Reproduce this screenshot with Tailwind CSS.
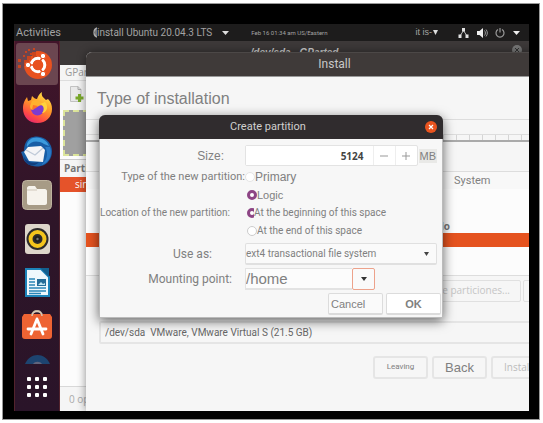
<!DOCTYPE html>
<html lang="en">
<head>
<meta charset="utf-8">
<meta name="viewport" content="width=device-width, initial-scale=1">
<title>Install Ubuntu</title>
<script src="https://cdn.jsdelivr.net/npm/@tailwindcss/browser@4"></script>
</head>
<body class="bg-white font-['Liberation_Sans',sans-serif] text-[#808080]">
<div class="h-screen pt-[3px] pb-[3px] pl-[2px] pr-[3px]">
<div class="flex h-full flex-col border border-[#999] bg-black pt-[20px] pr-[10px] pb-[8px] pl-[11px]">
<main class="flex min-h-0 flex-1 flex-col overflow-hidden whitespace-nowrap bg-[#f6f6f6]">

  <!-- Top bar -->
  <header class="flex h-[17px] shrink-0 items-center bg-[#1d1c1c] font-[Roboto,sans-serif] text-[#a3a3a3]">
    <button class="w-[79px] pl-[2px] text-left text-[11px] leading-[17px]">Activities</button>
    <button class="flex items-center text-[10px] leading-[17px]">
      <svg class="h-[11px] w-[4px]" viewBox="0 0 4 11"><path d="M4 1C0 2 0 9 4 10M3 2v7" fill="none" stroke="#aaa" stroke-width="1.3"/></svg>
      install Ubuntu 20.04.3 LTS
      <svg class="ml-[10px] h-[4px] w-[7px]" viewBox="0 0 7 4"><path d="M0 0h7L3.500 4z" fill="#ddd"/></svg>
    </button>
    <time class="ml-[22px] text-[6px] leading-[17px]">Feb 16 01:34 am US/Eastern</time>
    <div class="ml-auto flex items-center pr-[9px]">
      <button class="mr-[20px] flex items-center gap-[1px] font-['Liberation_Sans',sans-serif] text-[9px] leading-[17px]">it is-
        <svg class="h-[5px] w-[5px]" viewBox="0 0 5 5"><path d="M0 0h5L2.500 5z" fill="#ddd"/></svg>
      </button>
      <svg class="h-[10px] w-[11px]" viewBox="0 0 11 10"><path d="M5.500 2.500L2 8M5.500 2.500L9 8" stroke="#bbb" stroke-width="1"/><path d="M4 0h3v3.500H4zM.5 6.500h3V10h-3zM7.500 6.500h3V10h-3z" fill="#e2e2e2"/></svg>
      <svg class="ml-[8px] h-[10px] w-[11px]" viewBox="0 0 11 10"><path d="M0 3h2.500L6 0v10L2.500 7H0z" fill="#eee"/><path d="M7.500 2.500c1.200 1.500 1.200 3.500 0 5M9 1.500c1.800 2 1.800 5 0 7" fill="none" stroke="#999"/></svg>
      <svg class="ml-[7px] h-[10px] w-[10px]" viewBox="0 0 10 10"><path d="M3 1.600a4 4 0 1 0 4 0M5 0v4.500" fill="none" stroke="#999" stroke-width="1.200"/></svg>
      <svg class="ml-[8px] h-[4px] w-[7px]" viewBox="0 0 7 4"><path d="M0 0h7L3.500 4z" fill="#eee"/></svg>
    </div>
  </header>

  <div class="flex min-h-0 flex-1">
    <!-- Dock -->
    <nav class="flex w-[46px] shrink-0 flex-col items-center border-x border-[#53232d] bg-linear-to-b from-[#42142a] via-[#2e1528] to-[#2a1429] pt-[2px]">
      <button class="flex h-[42px] w-[42px] items-center justify-center rounded-[3px] bg-[#6b4650]" aria-label="Ubuntu installer">
        <svg class="h-[36px] w-[40px]" viewBox="0 0 40 36">
          <circle cx="21" cy="19" r="14" fill="#e8511f"/>
          <path d="M5 3h14v7h-5v4H5z" fill="#6b4650"/>
          <path d="M15 6h4v4h-4zM10 10h4v4h-4zM8 5h2v2H8zM11 3h2v2h-2zM16 2h2v2h-2zM6 9h2v2H6zM13 7h2v2h-2zM1 13h3v3H1zM1 19h3v3H1zM7 14h5v6H7zM16 10h4v5h-4z" fill="#c9451f"/>
          <circle cx="21" cy="19" r="6.800" fill="none" stroke="#fff" stroke-width="3"/>
          <g stroke="#e8511f" stroke-width="1.600"><path d="M21 19L25.500 11M21 19h-9M21 19l4.500 8"/></g>
          <circle cx="21" cy="19" r="5" fill="#e8511f"/>
          <g fill="#fff" stroke="#e8511f"><circle cx="26" cy="10" r="2.700"/><circle cx="11" cy="19" r="2.700"/><circle cx="26" cy="28" r="2.700"/></g>
        </svg>
      </button>
      <button class="mt-[7px]" aria-label="Firefox">
        <svg class="h-[31px] w-[31px]" viewBox="0 0 31 31">
          <defs><linearGradient id="ff" x1=".8" y1="0" x2=".3" y2="1"><stop offset="0" stop-color="#ffe94a"/><stop offset=".45" stop-color="#ff9a28"/><stop offset=".8" stop-color="#ff4a45"/><stop offset="1" stop-color="#e52a6c"/></linearGradient></defs>
          <path d="M20 0c-1 4 1 5 4 8l2-1c3 3 4 6 4 10 0 8-6 14-14.500 14S1 25 1 16.500C1 11 3 8 5 5l1 4 3-1 1-4c2 2 3 3 5 3 1-3 2-5 5-7z" fill="url(#ff)"/>
          <circle cx="15.500" cy="17" r="6.500" fill="#7d3bd0"/>
          <path d="M10 9c5-2 10 0 12 5-4-2-5 0-7 1-2 0-3 1-4 3-2 0-3-2-3-4z" fill="#ffb02e"/>
          <path d="M11 13l5 1-2 2-4 2z" fill="#ff7328"/>
          <path d="M18 12c4 1 5 6 2 9 5 0 7-7 3-11z" fill="#ffd23c"/>
        </svg>
      </button>
      <button class="mt-[13px]" aria-label="Thunderbird">
        <svg class="h-[31px] w-[32px]" viewBox="0 0 32 31">
          <path d="M9 2c8-4 18 0 21 8 3 8-1 18-10 20-8 2-17-2-18-9L0 16l3-1C3 9 5 4 9 2z" fill="#195ea6"/>
          <path d="M12 2c7-2 14 2 16 8l-5-2c-7-4-13-3-17 3-1-3 2-8 6-9z" fill="#3c9bdd"/>
          <path d="M3 16l4-5 13-1 4 4-2 12-14-1z" fill="#f5f5f7"/>
          <path d="M5 14l9 5 8-7" fill="none" stroke="#c0cad8" stroke-width="1.300"/>
          <path d="M24 11c4 6 2 14-4 18 8-2 12-10 9-18z" fill="#2b7bc7"/>
          <path d="M3 21c3 5 8 7 15 5-5 6-14 4-15-5z" fill="#123f7f"/>
        </svg>
      </button>
      <button class="mt-[13px]" aria-label="Files">
        <svg class="h-[30px] w-[30px]" viewBox="0 0 30 30"><rect x=".5" y=".5" width="29" height="29" rx="4" fill="#a79b86" stroke="#beb39f"/><path d="M5 8c0-1 1-2 2-2h6l2 3h8c1 0 2 1 2 2v12c0 1-1 2-2 2H7c-1 0-2-1-2-2z" fill="#f6f3ec"/><path d="M5 10h10" stroke="#cfc7b9"/></svg>
      </button>
      <button class="mt-[14px]" aria-label="Rhythmbox">
        <svg class="h-[30px] w-[25px]" viewBox="0 0 25 30"><rect width="25" height="30" rx="3" fill="#ddd6ca"/><circle cx="12.500" cy="15" r="11" fill="#2c2b2b"/><circle cx="12.500" cy="15" r="7" fill="none" stroke="#f4c51c" stroke-width="4"/><circle cx="12.500" cy="15" r="3" fill="#202020"/><circle cx="12.500" cy="15" r="1.200" fill="#777"/></svg>
      </button>
      <button class="mt-[14px]" aria-label="LibreOffice Writer">
        <svg class="h-[29px] w-[25px]" viewBox="0 0 25 29"><path d="M1 1h15l8 8v19H1z" fill="#eef8fc" stroke="#1c83b8" stroke-width="2"/><path d="M15 0h9v9z" fill="#135f8e"/><path d="M4 11h6M4 14h6M4 17h6M4 20h17M4 23h17M4 25.500h12" stroke="#2985b7" stroke-width="1.300"/><path d="M12 11h9v7h-9z" fill="#236c98"/><path d="M13 17l3-3 2 2 2-1v2z" fill="#bde3ef"/></svg>
      </button>
      <button class="mt-[13px]" aria-label="Ubuntu Software">
        <svg class="h-[29px] w-[30px]" viewBox="0 0 30 29"><path d="M10 6c0-7 10-7 10 0" fill="none" stroke="#b6aa99" stroke-width="1.800"/><path d="M2 4h26l2 3v19c0 2-1 3-3 3H3c-2 0-3-1-3-3V7z" fill="#ee6333"/><path d="M10 6c0-6 10-6 10 0" fill="none" stroke="#d8c9b6" stroke-width="1.500"/><path d="M15 9L9 24M15 9l6 15M6 19h18" stroke="#fff" stroke-width="2.800" stroke-linecap="round"/></svg>
      </button>
      <button class="mt-[16px]" aria-label="Help">
        <svg class="h-[9px] w-[25px]" viewBox="0 0 25 9"><path d="M0 9C5-3 20-3 25 9z" fill="#1d4470"/><path d="M8 9c2-3 7-3 9 0z" fill="#60647c"/></svg>
      </button>
      <button class="mt-[13px] grid grid-cols-3 gap-[4px]" aria-label="Show applications">
        <i class="size-[4px] rounded-[1px] bg-white"></i><i class="size-[4px] rounded-[1px] bg-white"></i><i class="size-[4px] rounded-[1px] bg-white"></i>
        <i class="size-[4px] rounded-[1px] bg-white"></i><i class="size-[4px] rounded-[1px] bg-white"></i><i class="size-[4px] rounded-[1px] bg-white"></i>
        <i class="size-[4px] rounded-[1px] bg-white"></i><i class="size-[4px] rounded-[1px] bg-white"></i><i class="size-[4px] rounded-[1px] bg-white"></i>
      </button>
    </nav>

    <!-- Desktop with stacked windows -->
    <div class="relative min-w-0 flex-1 overflow-hidden">
      <section class="absolute inset-0 flex flex-col bg-[#fcfcfc]">
        <div class="flex h-[24px] shrink-0 items-start justify-center bg-[#3d3939] pt-[5px] text-[10px] leading-[14px] font-bold italic text-[#ccc]">/dev/sda - GParted</div>
        <div class="h-[16px] shrink-0 border-b border-[#ddd] bg-[#f5f5f5] pl-[5px] font-['Open_Sans',sans-serif] text-[10px] leading-[15px] text-[#999]">GParted</div>
        <div class="h-[29px] shrink-0 bg-[#f5f5f5] pt-[5px] pl-[10px]">
          <svg class="h-[17px] w-[14px]" viewBox="0 0 14 17"><path d="M.5.5H8l3 3v12H.5z" fill="#e9e9e9" stroke="#c2c2c2"/><path d="M8 .5v3h3" fill="none" stroke="#aaa"/><path d="M9.500 8v8M5.500 12h8" stroke="#7aaa2a" stroke-width="3"/></svg>
        </div>
        <div class="ml-[3px] h-[46px] shrink-0 border-2 border-dashed border-[#dce59b] bg-[#a0a0a0]"></div>
        <div class="mt-[3px] h-[18px] shrink-0 border-t border-[#ccc] bg-[#f5f5f5] pl-[4px] font-['Open_Sans',sans-serif] text-[10px] leading-[17px] font-bold text-[#777]">Partition</div>
        <div class="h-[15px] shrink-0 bg-[#e5532a] pl-[15px] font-['Open_Sans',sans-serif] text-[10px] leading-[15px] text-white">sin asignar</div>
        <div class="mt-auto h-[25px] shrink-0 border-t border-[#d8d8d8] bg-[#f5f5f5] pl-[9px] font-['Open_Sans',sans-serif] text-[10px] leading-[24px] text-[#aaa]">0 operations</div>
      </section>
      <svg class="absolute top-[4px] right-[7px] h-[10px] w-[10px]" viewBox="0 0 10 10"><circle cx="5" cy="5" r="5" fill="#777"/><path d="M3 3l4 4M7 3L3 7" stroke="#333"/></svg>

      <section class="absolute top-[11px] -right-[54px] bottom-0 left-[26px] flex flex-col rounded-t-[6px] bg-[#f6f6f6] shadow-[0_0_10px_rgba(0,0,0,0.45)]">
        <h1 class="h-[25px] shrink-0 rounded-t-[6px] border-t border-b border-t-[#4c4847] border-b-[#999] bg-[#3f3a39] text-center font-[Roboto,sans-serif] text-[12px] leading-[22px] text-[#c8c8c8]">Install</h1>
        <h2 class="h-[43px] shrink-0 border-b border-[#ddd] pl-[11px] text-[16px] leading-[44px]">Type of installation</h2>
        <div class="mt-[14px] flex h-[8px] shrink-0 border-t border-b-2 border-t-[#ddd] border-b-[#aaa]">
          <div class="ml-auto h-full w-[140px] bg-[repeating-linear-gradient(90deg,#d5d5d5_0_1px,transparent_1px_13px)]"></div>
        </div>
        <table class="mt-[29px] w-full table-fixed border-y border-[#ddd] bg-[#fcfcfc]">
          <colgroup><col class="w-[365px]"><col></colgroup>
          <thead><tr class="h-[17px] bg-[#f8f8f8]"><th></th><th class="p-0 pl-[3px] text-left font-[Roboto,sans-serif] text-[11px] leading-[17px] font-normal">System</th></tr></thead>
          <tbody class="font-['Open_Sans',sans-serif] text-[10px] leading-[14px]">
            <tr class="h-[30px]"><td></td><td></td></tr>
            <tr class="h-[14px] font-bold text-[#777]"><td class="p-0 pr-px text-right">do</td><td></td></tr>
            <tr class="h-[14px] bg-[#e5531f]"><td></td><td></td></tr>
            <tr class="h-[28px]"><td></td><td></td></tr>
          </tbody>
        </table>
        <div class="mt-[4px] flex shrink-0 gap-[2px] pl-[290px] font-['Open_Sans',sans-serif] text-[10px] text-[#c5c5c5]">
          <button class="flex h-[22px] w-[145px] shrink-0 items-center justify-end rounded-[2px] border border-[#e0e0e0] pr-[10px]">de particiones...</button>
          <button class="h-[22px] flex-1 rounded-[2px] border border-[#e0e0e0]" aria-label="Revert"></button>
        </div>
        <div class="mt-[17px] ml-[13px] shrink-0">
          <select aria-label="Boot loader device" class="h-[23px] w-full appearance-none rounded-[2px] border-2 border-[#e5e5e5] bg-[#f6f6f6] pl-[4px] font-[Roboto,sans-serif] text-[10px] leading-[17px] text-[#666]"><option>/dev/sda&nbsp; VMware, VMware Virtual S (21.5 GB)</option></select>
        </div>
        <div class="mt-[12px] flex shrink-0 gap-[4px] pl-[287px]">
          <button class="h-[23px] w-[55px] rounded-[3px] border-2 border-[#e5e5e5] font-[Roboto,sans-serif] text-[8px]">Leaving</button>
          <button class="h-[23px] w-[55px] rounded-[3px] border-2 border-[#e5e5e5] text-[13px]">Back</button>
          <button class="h-[23px] w-[76px] rounded-[3px] border-2 border-[#e5e5e5] pl-[11px] text-left font-['Open_Sans',sans-serif] text-[10px] text-[#bbb]">Install</button>
        </div>
      </section>

      <form class="absolute top-[74px] left-[39px] w-[344px] rounded-t-[6px] border border-[#bbb] bg-[#f7f7f7] pb-[2px] font-[Roboto,sans-serif] text-[12px] leading-[18px] shadow-[0_3px_12px_rgba(0,0,0,0.6)]">
        <div class="relative -mx-px -mt-px h-[24px] rounded-t-[6px] bg-[#302c2e] text-center text-[11px] leading-[24px] text-[#d0d0d0]">
          <h2 class="pr-[6px]">Create partition</h2>
          <button type="button" class="absolute top-[6px] right-[6px] size-[12px]" aria-label="Close"><svg viewBox="0 0 12 12"><circle cx="6" cy="6" r="6" fill="#e9541f"/><path d="M4 4l4 4M8 4L4 8" stroke="#fff" stroke-width="1.200"/></svg></button>
        </div>
        <div class="grid grid-cols-[145px_1fr] items-center pt-[6px] pr-[5px]">
          <label for="size" class="pr-[21px] text-right font-['Liberation_Sans',sans-serif] text-[12px]">Size:</label>
          <div class="flex h-[21px] items-center">
            <div class="flex h-full flex-1 rounded-[2px] border border-[#e3e3e3] bg-white">
              <input id="size" value="5124" class="w-0 flex-1 bg-white pr-[9px] text-right font-['Open_Sans',sans-serif] text-[10px] font-bold text-[#444]">
              <button type="button" aria-label="Decrease" class="flex w-[22px] items-center justify-center border-l border-[#eee]"><svg class="size-[8px]" viewBox="0 0 8 8"><path d="M0 4h8" stroke="#999"/></svg></button>
              <button type="button" aria-label="Increase" class="flex w-[22px] items-center justify-center border-l border-[#eee]"><svg class="size-[8px]" viewBox="0 0 8 8"><path d="M0 4h8M4 0v8" stroke="#999"/></svg></button>
            </div>
            <span class="ml-[1px] bg-[#e9e9e7] px-[1px] font-['Liberation_Sans',sans-serif] text-[11px] leading-[14px]">MB</span>
          </div>

          <span class="pt-[2px] text-right text-[11px]">Type of the new partition:</span>
          <label class="flex items-center pt-[2px] font-['Liberation_Sans',sans-serif] text-[12px]"><input type="radio" name="type" class="size-[10px] appearance-none rounded-full border border-[#e5e5e5] bg-white checked:border-[3px] checked:border-[#8d4585]">Primary</label>
          <span></span>
          <label class="flex items-center pl-[2px] font-['Liberation_Sans',sans-serif] text-[11px]"><input type="radio" name="type" checked class="size-[10px] appearance-none rounded-full border border-[#ddd] bg-white checked:border-[3px] checked:border-[#8d4585]">Logic</label>
          <span class="mr-[15px] justify-self-end bg-[#f7f7f7] text-right text-[10px]">Location of the new partition:</span>
          <label class="flex items-center pl-[2px] text-[10px]"><input type="radio" name="location" checked class="-mr-[3px] size-[10px] appearance-none rounded-full border border-[#ddd] bg-white checked:border-[3px] checked:border-[#8d4585]"><span class="bg-[#f7f7f7]">At the beginning of this space</span></label>
          <span></span>
          <label class="flex items-center pl-[2px] text-[10px]"><input type="radio" name="location" class="size-[10px] appearance-none rounded-full border border-[#ccc] bg-white checked:border-[3px] checked:border-[#8d4585]">At the end of this space</label>

          <label for="use" class="pt-[3px] pr-[33px] text-right">Use as:</label>
          <div class="relative pt-[3px]">
            <select id="use" class="h-[22px] w-full appearance-none rounded-[2px] border border-b-2 border-[#e0e0e0] bg-[#fafafa] text-[10px] leading-[18px]"><option>ext4 transactional file system</option></select>
            <svg class="pointer-events-none absolute top-[12px] right-[8px] h-[4px] w-[5px]" viewBox="0 0 5 4"><path d="M0 0h5L2.500 4z" fill="#444"/></svg>
          </div>

          <label for="mount" class="pt-[3px] pr-[13px] text-right">Mounting point:</label>
          <div class="flex pt-[3px]">
            <input id="mount" value="/home" class="h-[22px] w-[107px] border border-r-0 border-b-2 border-[#e3e3e3] bg-[#fcfcfc] font-['Liberation_Sans',sans-serif] text-[15px]">
            <button type="button" aria-label="Choose mount point" class="flex h-[22px] w-[23px] items-center justify-center rounded-[2px] border border-[#eda28b] bg-[#fafafa]"><svg class="h-[4px] w-[6px]" viewBox="0 0 6 4"><path d="M0 0h6L3 4z" fill="#333"/></svg></button>
          </div>
        </div>
        <div class="mt-[3px] flex justify-end gap-[3px] pr-[1px]">
          <button type="button" class="h-[22px] w-[55px] rounded-[2px] border border-b-2 border-[#dcdcdc] bg-[#fafafa] pl-[2px] text-left font-['Liberation_Sans',sans-serif] text-[11px]">Cancel</button>
          <button type="submit" class="h-[22px] w-[55px] rounded-[2px] border border-b-2 border-[#dcdcdc] bg-white font-['Liberation_Sans',sans-serif] text-[11px] font-bold">OK</button>
        </div>
      </form>
    </div>
  </div>
</main>
</div>
</div>
</body>
</html>
